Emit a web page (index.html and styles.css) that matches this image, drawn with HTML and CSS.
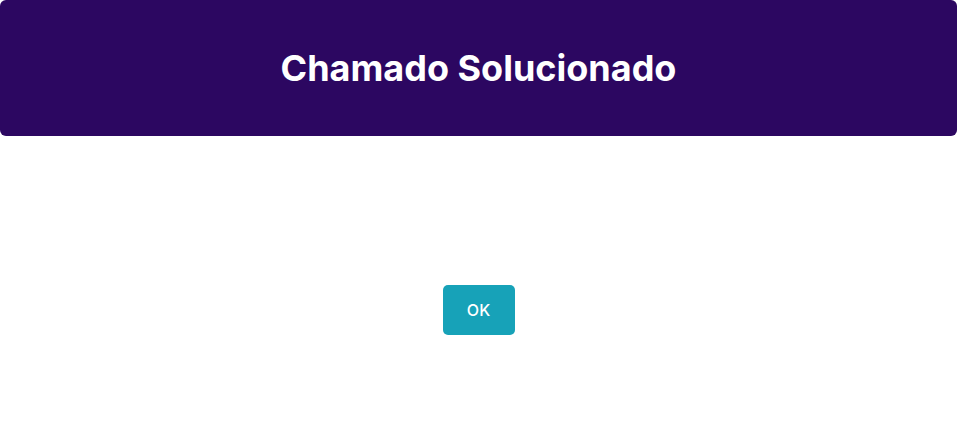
FILE: index.html
```html
<!DOCTYPE html>
<html>
<head>
<meta charset="utf-8">
<link rel="stylesheet" href="styles.css">
</head>
<body>
<div class="modal">
  <div class="modal-header"><h1 class="title">Chamado Solucionado</h1></div>
  <div class="modal-body">
    <button class="btn-ok">OK</button>
  </div>
</div>
</body>
</html>
```
FILE: styles.css
```css
html, body { margin: 0; padding: 0; background: #fff; }
body { font-family: Inter, "Noto Sans", sans-serif; }
.modal { width: 957px; height: 442px; display: flex; flex-direction: column; }
.modal-header {
  height: 136px;
  background: #2c0761;
  border-radius: 6px;
  display: flex;
  align-items: center;
  justify-content: center;
}
.title { margin: 0; color: #fff; font-size: 36px; font-weight: 700; letter-spacing: 0; }
.modal-body { flex: 1; display: flex; justify-content: center; padding-top: 149px; align-items: flex-start; }
.btn-ok {
  width: 72px; height: 50px;
  background: #17a2b8;
  border: none;
  border-radius: 5px;
  color: #fff;
  font-family: Inter, sans-serif;
  font-size: 16px;
  font-weight: 500;
}
```
